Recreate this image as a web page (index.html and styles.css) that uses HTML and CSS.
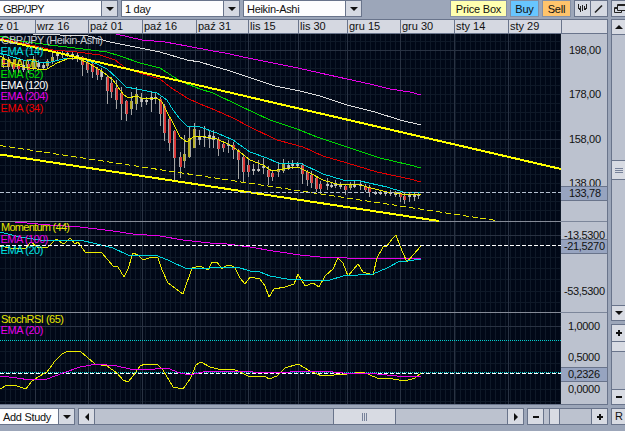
FILE: index.html
```html
<!DOCTYPE html>
<html lang="pl">
<head>
    <meta charset="UTF-8">
    <meta name="viewport" content="width=device-width, initial-scale=1.0">
    <title>GBP/JPY</title>
    <link rel="stylesheet" href="styles.css">
</head>
<body>
    <div class="app">
        <div class="toolbar">
            <div class="select"><span>GBP/JPY</span><i class="drop"><b class="tri down"></b></i></div>
            <div class="select"><span>1 day</span><i class="drop"><b class="tri down"></b></i></div>
            <div class="select"><span>Heikin-Ashi</span><i class="drop"><b class="tri down"></b></i></div>
            <div class="actions">
                <button class="btn price-box">Price Box</button>
                <button class="btn buy">Buy</button>
                <button class="btn sell">Sell</button>
                <div class="tools">
                    <button class="tool"><svg width="15" height="15"><path d="M3.5 3v5M5.5 5v6M7.5 4v6M9.5 5v4M11.5 3v5M4.5 7v2M10.5 7v2"/></svg></button>
                    <button class="tool"><svg width="15" height="15"><path class="pen" d="M4 11.5L11 4.5"/></svg></button>
                </div>
                <button class="tool window"><svg width="14" height="15"><path d="M5.5 3.5h9v6h-9zM5 4.5h9M5 6.5H2.5v5h7V10M2 7.5h3"/></svg></button>
            </div>
        </div>

        <div class="main">
            <div class="chart">
                <div class="dates">
                    <span class="d0">z 01</span><span class="d1">wrz 16</span><span class="d2">paź 01</span><span class="d3">paź 16</span><span class="d4">paź 31</span><span class="d5">lis 15</span><span class="d6">lis 30</span><span class="d7">gru 15</span><span class="d8">gru 30</span><span class="d9">sty 14</span><span class="d10">sty 29</span><span class="d11"></span>
                </div>
                <div class="panels">
                    <svg class="plot" width="561" height="370" viewBox="0 34 561 370">
                        <g id="grid"></g>
                        <g id="candles"></g>
                        <path class="split" d="M0 221.5H561M0 312.5H561"/>

                        <!-- moving averages -->
                        <polyline class="magenta" points="116,34 142,40 165,42 187,46 213,51 225,53 248,58 298,68 320,73 347,79 370,84 390,89 410,92 421,95"/>
                        <polyline class="white" points="33,34 60,35 88,36 110,42 140,48 160,52 187,60 200,62 213,66 230,71 248,77 275,86 300,91 320,96 347,105 375,112 400,120 421,125"/>
                        <polyline class="green" points="0,36 20,41 50,45 83,49 107,52 120,56 140,63 160,68 180,81 200,89 213,93 240,106 270,120 297,129 317,137 347,147 380,158 410,165 421,168"/>
                        <polyline class="red" points="0,38 30,45 53,50 77,52 100,55 115,60 127,69 160,79 170,87 187,98 200,104 215,110 233,118 250,127 277,140 303,147 323,156 347,163 377,172 410,179 421,182"/>
                        <polyline class="cyan" points="0,53 23,60 47,63 67,58 80,58 97,64 107,69 117,78 126,87 137,89 157,93 167,100 173,110 180,119 187,126 200,127 217,133 233,140 240,145 250,152 267,158 278,163 300,163 323,174 343,180 360,181 387,187 403,192 421,193"/>
                        <polyline class="yellow" points="0,56 12,63 23,67 37,69 47,69 57,63 67,59 77,58 90,64 103,72 113,80 123,94 128,98 137,96 143,99 157,98 162,102 167,112 173,123 180,137 187,142 193,137 200,136 217,139 230,145 240,152 250,160 263,165 272,171 283,169 298,167 310,173 323,180 340,185 357,184 367,187 387,192 410,195 421,194"/>
                        <path class="trend" d="M0 39.500L561 169M0 154.500L439 221"/>
                        <path class="trend-dash" d="M0 145.500L496 220.500"/>
                        <path class="last" d="M0 192.500H561"/>

                        <!-- momentum -->
                        <polyline class="magenta" points="15,222 50,225 80,227 113,231 133,234 160,236 183,240 210,243 227,244 250,247 273,251 300,255 320,257 347,258 373,259 397,258 421,258"/>
                        <polyline class="yellow" points="0,246 10,248 25,249 31,242 37,247 48,247 56,239 62,243 65,243 70,238 75,244 78,242 85,252 102,253 113,266 118,267 124,277 128,269 133,253 138,255 143,260 152,257 158,258 162,270 168,283 183,294 192,268 200,266 208,270 212,262 217,262 222,269 227,265 232,266 235,268 240,278 245,284 250,277 260,279 265,286 269,297 274,289 285,287 294,284 298,274 305,286 313,283 319,287 325,276 333,269 338,258 343,263 348,276 358,264 363,272 373,275 377,258 383,247 387,246 392,239 396,235 400,246 407,262 421,246"/>
                        <polyline class="cyan" points="0,232 20,237 40,240 80,240 97,244 113,248 128,255 158,256 170,261 187,269 210,268 220,267 237,267 250,271 260,272 270,276 287,279 303,280 320,281 330,280 343,276 373,274 387,268 400,261 407,261 421,259"/>
                        <path class="last bright" d="M0 245.500H561"/>

                        <!-- stochastic RSI -->
                        <path class="level" d="M0 340.500H561"/>
                        <path class="last bright" d="M0 373.500H561"/>
                        <path class="level" d="M0 372.500H561"/>
                        <polyline class="yellow" points="0,389 7,385 17,386 26,389 32,381 38,377 47,372 55,361 62,354 68,351 80,351 87,357 95,364 107,366 117,373 123,380 128,382 133,376 140,366 145,364 158,365 163,370 173,387 183,389 190,379 196,365 201,362 210,367 218,369 233,369 240,372 250,377 265,376 269,379 277,376 285,368 298,364 310,371 322,376 347,374 363,372 377,378 393,379 405,381 415,378 421,373"/>
                        <polyline class="magenta" points="0,376 17,378 30,380 47,379 63,373 80,367 97,364 117,366 130,369 143,370 167,368 180,373 190,375 203,372 233,371 253,372 280,373 300,371 323,371 343,373 377,374 397,376 421,377"/>

                        <g class="legend">
                            <text class="t-silver" x="1" y="43.500" textLength="102">GBP/JPY (Heikin-Ashi)</text>
                            <text class="t-cyan" x="0.500" y="55" textLength="43">EMA (14)</text>
                            <text class="t-yellow" x="0.500" y="66.500" textLength="37">EMA (7)</text>
                            <text class="t-green" x="0.500" y="77.500" textLength="43">EMA (52)</text>
                            <text class="t-white" x="0.500" y="89" textLength="48">EMA (120)</text>
                            <text class="t-magenta" x="0.500" y="100" textLength="48">EMA (204)</text>
                            <text class="t-red" x="0.500" y="111.500" textLength="43">EMA (34)</text>
                            <text class="t-yellow" x="1" y="231" textLength="69">Momentum (44)</text>
                            <text class="t-magenta" x="0.500" y="243" textLength="48">EMA (100)</text>
                            <text class="t-cyan" x="0.500" y="254" textLength="43">EMA (20)</text>
                            <text class="t-yellow" x="1" y="323" textLength="63">StochRSI (65)</text>
                            <text class="t-magenta" x="0.500" y="334" textLength="43">EMA (20)</text>
                        </g>
                    </svg>
                    <svg class="axis" width="46" height="370" viewBox="561 34 46 370">
                        <path class="axis-split" d="M561 221.500H607M561 312.500H607"/>
                        <text x="569" y="54" textLength="32">198,00</text>
                        <text x="569" y="98" textLength="32">178,00</text>
                        <text x="569" y="143" textLength="32">158,00</text>
                        <text x="569" y="187" textLength="32">138,00</text>
                        <text x="564" y="239" textLength="41">-13,5300</text>
                        <text x="564" y="295" textLength="41">-53,5300</text>
                        <text x="568" y="330" textLength="32">1,0000</text>
                        <text x="568" y="361" textLength="32">0,5000</text>
                        <text x="568" y="393" textLength="32">0,0000</text>
                        <rect class="mark" x="560.500" y="186.500" width="47" height="14"/>
                        <rect class="mark" x="560.500" y="239.500" width="47" height="14"/>
                        <rect class="mark" x="560.500" y="367.500" width="47" height="14"/>
                        <text x="569" y="196.500" textLength="32">133,78</text>
                        <text x="564" y="249.500" textLength="41">-21,5270</text>
                        <text x="568" y="377.500" textLength="32">0,2326</text>
                    </svg>
                </div>
            </div>

            <div class="side">
                <div class="vscroll">
                    <i class="cell end"><b class="tri up"></b></i>
                    <i class="cell vthumb"><b class="grip"></b></i>
                    <i class="cell end"><b class="tri down"></b></i>
                </div>
                <div class="vzoom">
                    <i class="cell zin"><b class="plus"></b></i>
                    <i class="cell knob"></i>
                    <i class="cell zout"><b class="minus"></b></i>
                </div>
            </div>
        </div>

        <div class="bottom">
            <div class="select study"><span>Add Study</span><i class="drop"><b class="tri down"></b></i></div>
            <div class="hscroll">
                <i class="cell hend"><b class="tri left"></b></i>
                <i class="cell hthumb"><b class="grip side-grip"></b></i>
                <i class="cell hend"><b class="tri right"></b></i>
            </div>
            <div class="hzoom">
                <i class="cell hend"><b class="minus"></b></i>
                <i class="cell hknob"></i>
                <i class="cell hend"><b class="plus"></b></i>
            </div>
            <div class="reset">R</div>
        </div>
    </div>
    <script src="script.js"></script>
</body>
</html>
```

FILE: styles.css
```css
* {
    margin: 0;
    padding: 0;
    box-sizing: border-box;
}

body {
    font-family: "Liberation Sans", Arial, sans-serif;
    font-size: 11px;
    color: #111;
    background: #9ca6b9;
    overflow: hidden;
}

.app {
    width: 625px;
    height: 431px;
    display: flex;
    flex-direction: column;
    overflow: hidden;
}

i, b {
    display: block;
    flex: none;
}

/* toolbar */
.toolbar {
    height: 19px;
    display: flex;
    align-items: flex-start;
    gap: 3px;
}

.select {
    display: flex;
    width: 119px;
    height: 17px;
    background: #fdfdfe;
    border: 1px solid #69748b;
}

.toolbar .select:first-child {
    width: 118px;
    border-left: 0;
}

.select span {
    flex: 1;
    padding-left: 3px;
    line-height: 16px;
    letter-spacing: -0.3px;
    white-space: nowrap;
}

.toolbar .select:first-child span {
    letter-spacing: -0.8px;
}

.drop {
    width: 16px;
    display: flex;
    align-items: center;
    justify-content: center;
    background: #d5d9e2;
    border-left: 1px solid #69748b;
}

.tri {
    width: 0;
    height: 0;
    border: 4px solid transparent;
}

.down {
    border-top-color: #111;
    border-bottom-width: 0;
}

.up {
    border-bottom-color: #111;
    border-top-width: 0;
}

.left {
    border-right-color: #111;
    border-left-width: 0;
}

.right {
    border-left-color: #111;
    border-right-width: 0;
}

.actions {
    flex: 1;
    display: flex;
    justify-content: flex-end;
    gap: 3px;
}

.btn {
    height: 17px;
    font: inherit;
    letter-spacing: -0.2px;
    color: #111;
    border: 1px solid #8490a6;
    white-space: nowrap;
}

.price-box {
    width: 57px;
    background: #ffffb0;
}

.buy {
    width: 29px;
    background: #68c6ff;
}

.sell {
    width: 29px;
    background: #ffc46c;
}

.tools {
    display: flex;
}

.tool {
    width: 17px;
    height: 17px;
    background: #d5d9e2;
    border: 1px solid #69748b;
}

.tool + .tool {
    border-left: 0;
}

.tool svg {
    display: block;
}

.tool path {
    fill: none;
    stroke: #222;
}

.tool .pen {
    stroke-width: 1.6;
}

.window {
    width: 14px;
    border-right: 0;
}

/* chart */
.main {
    display: flex;
    height: 386px;
}

.chart {
    width: 608px;
    border-right: 1px solid #69748b;
    border-bottom: 1px solid #69748b;
}

.dates {
    display: flex;
    height: 15px;
    border-top: 1px solid #69748b;
    border-bottom: 1px solid #69748b;
    background: #d5d8e1;
}

.dates span {
    width: 54px;
    padding-left: 1px;
    line-height: 13px;
    border-left: 1px solid #69748b;
    white-space: nowrap;
    overflow: hidden;
}

.dates .d0 {
    width: 35px;
    padding-left: 0;
    border-left: 0;
    text-indent: -2px;
}

.dates .d1 { width: 53px; }
.dates .d4 { width: 52px; }
.dates .d5 { width: 50px; }
.dates .d6 { width: 49px; }
.dates .d7 { width: 53px; }
.dates .d10 { width: 53px; }
.dates .d11 { flex: 1; }

.panels {
    display: flex;
    height: 370px;
}

.plot {
    display: block;
    background: #010817;
}

.plot path,
.plot polyline {
    fill: none;
    shape-rendering: crispEdges;
}

.minor { stroke: #0f1928; }
.major { stroke: #293242; }
.split { stroke: #858b98; }

.magenta { stroke: #e800e8; }
.white { stroke: #dcdcdc; }
.green { stroke: #00d800; }
.red { stroke: #e00000; }
.cyan { stroke: #00d4dc; }
.yellow { stroke: #ecec00; }

.plot .trend {
    stroke: #ffff00;
    stroke-width: 2;
}

.trend-dash {
    stroke: #e2e200;
    stroke-dasharray: 6 3;
}

.last {
    stroke: #b5c0d0;
    stroke-dasharray: 4 2;
}

.bright { stroke: #fff; }

.level {
    stroke: #00d0d0;
    stroke-dasharray: 1 1;
}

.wick { stroke: #a4a4a4; }

.legend text {
    font-size: 11px;
}

.t-silver { fill: #c4c8d0; }
.t-cyan { fill: #00e0e0; }
.t-yellow { fill: #e8e800; }
.t-green { fill: #00e000; }
.t-white { fill: #fff; }
.t-magenta { fill: #e800e8; }
.t-red { fill: #f00000; }

.axis {
    display: block;
    background: #bcc2cf;
}

.axis text {
    font-size: 11px;
    fill: #111;
}

.axis-split { stroke: #7c869a; }

.mark {
    fill: #97a4c0;
    stroke: #69748b;
}

/* right side scrolling */
.side {
    width: 14px;
    margin-left: 3px;
    display: flex;
    flex-direction: column;
    gap: 3px;
}

.cell {
    display: flex;
    align-items: center;
    justify-content: center;
    background: #d8dbe3;
    border: 0 solid #69748b;
}

.vscroll,
.vzoom {
    display: flex;
    flex-direction: column;
    align-items: stretch;
    background: #bcc2cf;
    border: 1px solid #69748b;
    border-right: 0;
}

.vscroll {
    height: 302px;
    justify-content: space-between;
}

.end {
    height: 15px;
}

.end:first-child { border-bottom-width: 1px; }
.end:last-child { border-top-width: 1px; }

.vthumb {
    height: 20px;
    border-width: 1px 0;
}

.grip {
    width: 8px;
    height: 5px;
    background: repeating-linear-gradient(#77829a 0 1px, #d8dbe3 1px 2px);
}

.side-grip {
    width: 5px;
    height: 8px;
    background: repeating-linear-gradient(90deg, #77829a 0 1px, #d8dbe3 1px 2px);
}

.vzoom {
    height: 81px;
}

.zin {
    height: 17px;
    border-bottom-width: 1px;
}

.knob {
    height: 10px;
    border-bottom-width: 1px;
}

.zout {
    height: 15px;
    margin-top: auto;
    border-top-width: 1px;
}

.minus {
    width: 6px;
    height: 2px;
    background: #111;
}

.plus {
    width: 6px;
    height: 6px;
    background:
        linear-gradient(#111, #111) center / 6px 2px no-repeat,
        linear-gradient(#111, #111) center / 2px 6px no-repeat;
}

/* bottom bar */
.bottom {
    display: flex;
    height: 26px;
    padding-top: 3px;
    gap: 3px;
}

.study {
    width: 75px;
    border-left: 0;
}

.hscroll,
.hzoom {
    display: flex;
    height: 17px;
    background: #bcc2cf;
    border: 1px solid #69748b;
}

.hscroll {
    width: 446px;
    justify-content: space-between;
}

.hend {
    width: 16px;
}

.hend:first-child { border-right-width: 1px; }
.hend:last-child { border-left-width: 1px; }

.hthumb {
    width: 63px;
    margin-left: 126px;
    border-width: 0 1px;
}

.hzoom {
    width: 81px;
}

.hknob {
    width: 11px;
    margin: 0 auto 0 5px;
    border-width: 0 1px;
}

.reset {
    width: 14px;
    height: 17px;
    padding-left: 3px;
    line-height: 15px;
    background: #d8dbe3;
    border: 1px solid #69748b;
    border-right: 0;
}
```

FILE: script.js
```js
const NS = 'http://www.w3.org/2000/svg';

function add(parent, name, attrs) {
    const el = document.createElementNS(NS, name);
    for (const key in attrs) el.setAttribute(key, attrs[key]);
    parent.appendChild(el);
}

// Grid lines
const grid = document.getElementById('grid');
const majorX = [35, 88, 142, 195, 248, 298, 347, 400, 454, 508];
const majorY = [50, 139, 235, 326];
const minorY = [41, 59, 68, 76, 85, 94, 103, 112, 121, 130, 148, 157, 165, 174, 183, 201, 210,
    257, 268, 279, 291, 302, 351, 363, 389, 401];

let minor = '';
for (let x = 5; x < 561; x += 5) minor += `M${x}.5 34V404`;
minorY.forEach(y => minor += `M0 ${y}.5H561`);
add(grid, 'path', { class: 'minor', d: minor });

let major = '';
majorX.forEach(x => major += `M${x}.5 34V404`);
majorY.forEach(y => major += `M0 ${y}.5H561`);
add(grid, 'path', { class: 'major', d: major });

// Candles: x, high, low, body top, body bottom, type
const colors = { r: '#d83838', y: '#b4ac28', w: '#c4c4c4' };
const candles = [
    [3,55,68,58,65,'r'],[8,57,70,60,67,'r'],[13,59,72,62,69,'r'],[18,60,73,64,69,'r'],[23,60,72,65,70,'w'],
    [28,60,73,64,70,'r'],[33,56,70,60,68,'y'],[38,60,70,63,67,'w'],[43,62,69,65,68,'w'],[47,59,68,61,66,'y'],
    [52,51,64,57,62,'y'],[57,50,60,54,56,'w'],[62,51,58,53,55,'w'],[67,51,57,53,55,'w'],[72,52,60,54,57,'w'],
    [77,52,62,55,58,'w'],[82,56,76,57,65,'r'],[87,61,73,62,70,'r'],[92,63,78,64,72,'r'],[97,67,80,69,75,'r'],
    [101,68,80,71,77,'w'],[107,76,104,77,91,'r'],[111,77,98,83,92,'r'],[116,80,109,88,100,'r'],[121,87,120,93,104,'r'],
    [126,100,121,101,114,'r'],[131,92,115,101,109,'y'],[136,87,110,94,104,'y'],[141,93,107,98,102,'w'],[146,97,105,100,102,'w'],
    [151,92,112,97,100,'w'],[155,92,104,97,99,'w'],[160,97,126,99,114,'r'],[164,104,141,106,133,'r'],[169,117,151,119,143,'r'],
    [174,130,180,131,158,'r'],[180,152,178,157,167,'r'],[184,135,168,154,161,'y'],[189,126,158,138,157,'y'],[194,123,148,129,148,'y'],
    [199,130,145,137,140,'w'],[204,126,147,136,138,'w'],[209,130,148,135,139,'w'],[213,130,148,136,140,'w'],[218,137,156,139,149,'r'],
    [223,142,152,144,148,'r'],[228,140,153,144,146,'w'],[233,142,159,145,150,'r'],[238,149,179,150,160,'r'],[243,155,182,157,172,'r'],
    [248,159,177,165,172,'r'],[253,164,175,169,171,'w'],[258,160,172,169,171,'w'],[263,158,174,166,168,'w'],[268,166,185,170,177,'r'],
    [272,171,181,173,177,'r'],[278,162,177,169,172,'y'],[283,159,173,164,171,'y'],[288,161,170,165,168,'w'],[292,160,169,164,166,'w'],
    [297,162,168,164,166,'w'],[302,163,184,165,174,'r'],[307,170,186,172,180,'r'],[311,171,188,175,183,'r'],[316,176,192,178,189,'r'],
    [320,181,193,184,189,'r'],[327,178,190,184,186,'w'],[331,182,188,185,187,'w'],[335,180,188,184,186,'w'],[340,182,189,185,187,'w'],
    [345,184,195,186,190,'r'],[350,182,190,185,188,'y'],[354,181,188,184,187,'w'],[360,180,190,184,186,'w'],[365,184,192,186,190,'r'],
    [369,185,197,187,192,'r'],[375,191,195,192,194,'w'],[380,190,195,192,194,'w'],[385,191,196,193,194,'w'],[390,190,196,193,194,'w'],
    [395,191,197,193,195,'w'],[400,191,202,194,197,'r'],[404,193,204,196,200,'r'],[409,193,202,195,197,'w'],[414,192,201,195,197,'w'],
    [418,192,199,194,196,'w']
];
const group = document.getElementById('candles');
candles.forEach(([x, high, low, top, bottom, type]) => {
    add(group, 'path', { class: 'wick', d: `M${x}.5 ${high}V${low}` });
    // grey frame with a coloured core
    add(group, 'rect', { x: x - 1, y: top, width: 3, height: bottom - top, fill: '#a4a4a4' });
    add(group, 'rect', { x: x - (type === 'y' ? 1 : 0), y: top, width: 2, height: bottom - top, fill: colors[type] });
});
```
